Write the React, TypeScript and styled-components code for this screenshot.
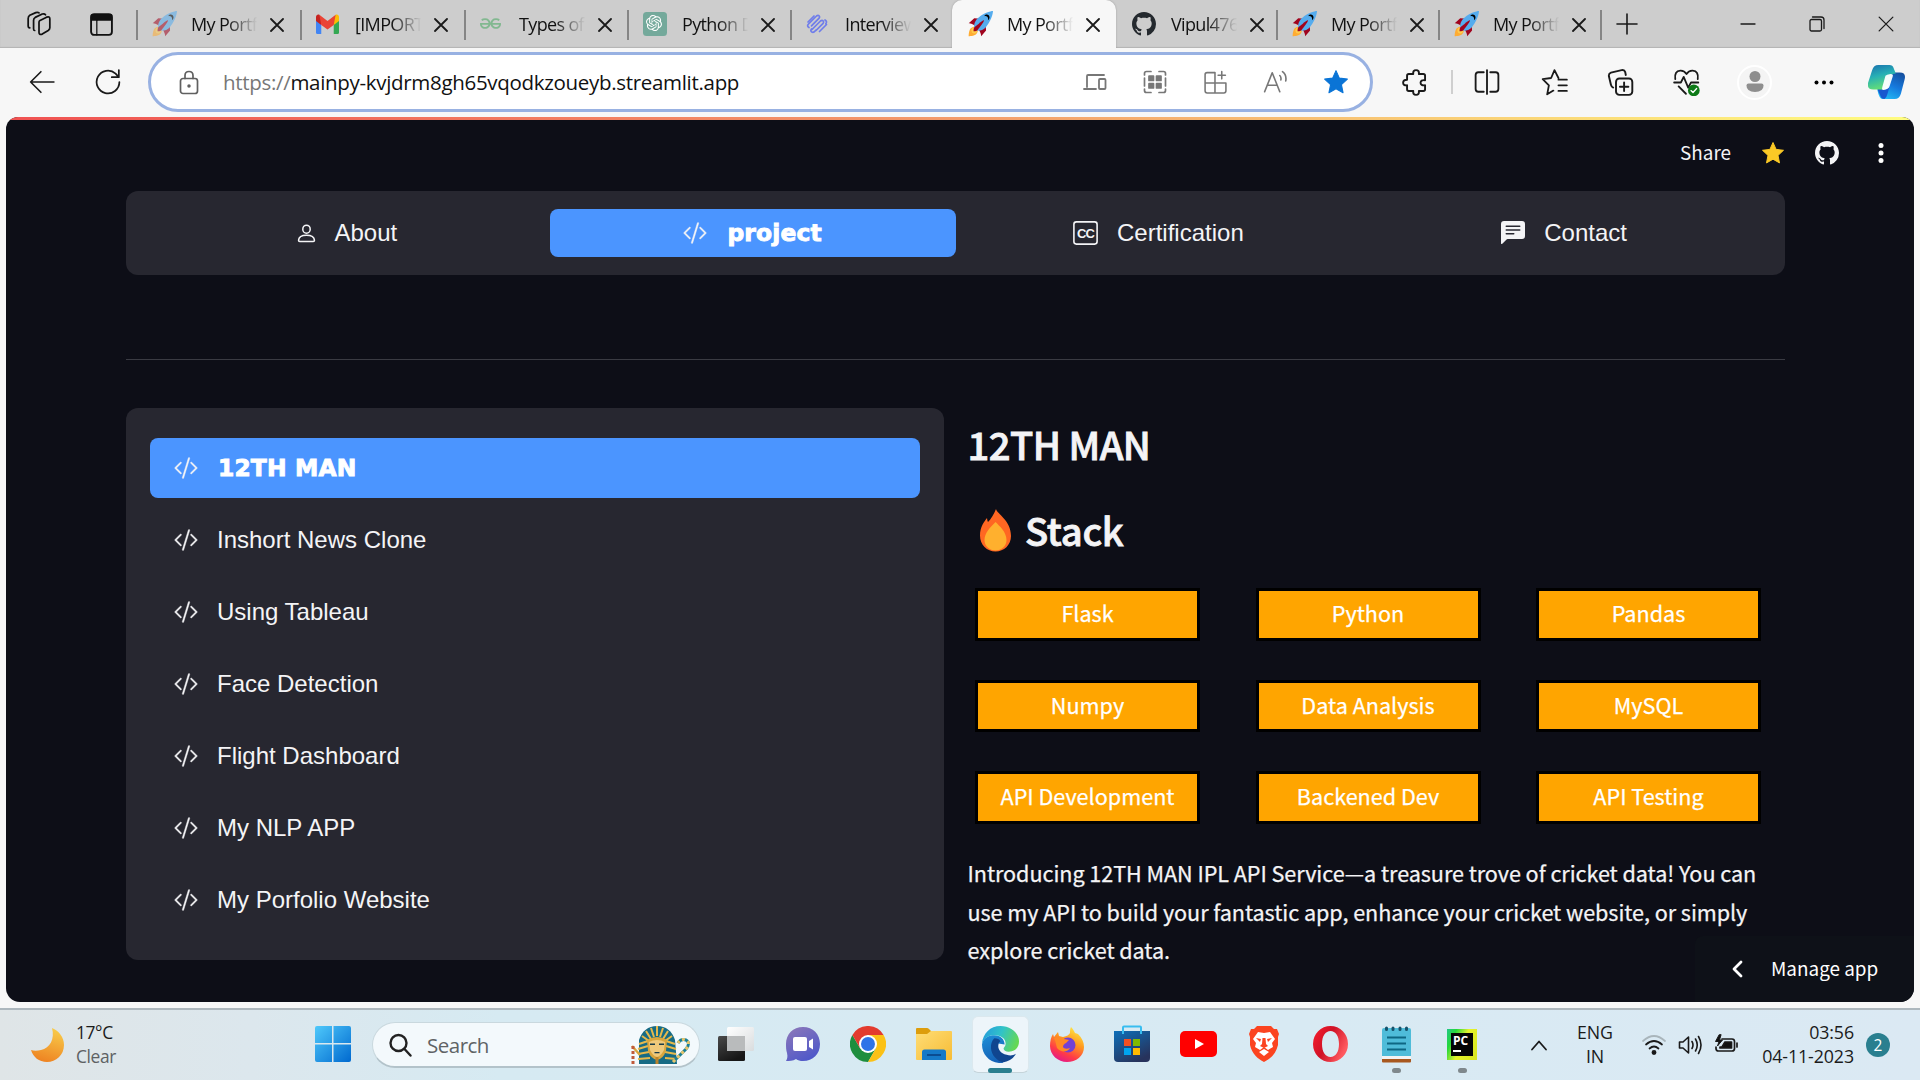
import React from "react";
import styled, { createGlobalStyle, css } from "styled-components";
import { BsCodeSlash, BsChatLeftTextFill, BsGithub } from "react-icons/bs";
import { SiOpenai, SiGeeksforgeeks } from "react-icons/si";

const UI = `"Open Sans", "Noto Sans", sans-serif`;
const SOURCE = `"Noto Sans CJK SC", "Open Sans", sans-serif`;
const ARIAL = `"Liberation Sans", Arial, sans-serif`;

const Global = createGlobalStyle`
  * { box-sizing: border-box; }
  html, body { margin: 0; padding: 0; overflow: hidden; }
  svg { display: block; flex: none; }
`;

/* ---------- window ---------- */
const Window = styled.div`
  width: 1920px;
  height: 1080px;
  display: flex;
  flex-direction: column;
  background: #f7f7f7;
  font-family: ${UI};
  overflow: hidden;
`;

/* ---------- tab strip ---------- */
const TabStrip = styled.div`
  height: 48px;
  flex: none;
  display: flex;
  background: #cdcdcd;
  box-shadow: inset 0 -1px 1px #b4b4b4;
`;
const StripTools = styled.div`
  width: 136px;
  display: flex;
  align-items: center;
  padding-left: 26px;
  gap: 37px;
`;
const Tab = styled.div<{ $w: number; $active?: boolean; $line?: boolean }>`
  width: ${(p) => p.$w}px;
  height: 48px;
  flex: none;
  display: flex;
  align-items: center;
  padding: 0 0 1px 16px;
  background: linear-gradient(#858585, #858585) no-repeat 0 10px / ${(p) => (p.$line ? 2 : 0)}px 30px;
  ${(p) =>
    p.$active &&
    css`
      background: #f7f7f7;
      border-radius: 10px 10px 0 0;
      box-shadow: 0 0 2px #999;
      clip-path: inset(0 -3px 0 -3px);
    `}
`;
const TabIcon = styled.div<{ $faded?: boolean }>`
  width: 25px;
  opacity: ${(p) => (p.$faded ? 0.55 : 1)};
`;
const TabTitle = styled.div`
  width: 72px;
  margin-left: 14px;
  white-space: nowrap;
  font-size: 18px;
  line-height: 28px;
  letter-spacing: -0.65px;
  color: #111;
  mask-image: linear-gradient(90deg, #000 50%, transparent 92%);
`;
const TabClose = styled.div`
  margin-left: 7px;
  padding-top: 2px;
`;
const WindowButtons = styled.div`
  margin-left: auto;
  display: flex;
`;
const WindowButton = styled.div`
  width: 69px;
  height: 47px;
  display: grid;
  place-items: center;
`;
const NewTab = styled.div`
  width: 54px;
  display: grid;
  place-items: center;
  background: linear-gradient(#858585, #858585) no-repeat 0 10px / 2px 30px;
`;

/* ---------- toolbar ---------- */
const Toolbar = styled.div`
  height: 69px;
  flex: none;
  display: flex;
  align-items: center;
  padding: 0 4px 1px 9px;
`;
const ToolCell = styled.div<{ $w: number }>`
  width: ${(p) => p.$w}px;
  flex: none;
  display: grid;
  place-items: center;
`;
const ExtensionsCell = styled(ToolCell)`
  padding-left: 7px;
`;
const ToolDivider = styled.div`
  width: 2px;
  height: 24px;
  background: #cfcfcf;
`;
const AddressBar = styled.div`
  width: 1225px;
  height: 60px;
  margin-left: 7px;
  display: flex;
  align-items: center;
  border: 3px solid #98b1e2;
  border-radius: 30px;
  background: #fff;
  padding: 0 5px 0 28px;
`;
const Url = styled.div`
  margin-left: 23px;
  flex: 1;
  font-size: 20.5px;
  line-height: 30px;
  letter-spacing: -0.31px;
  color: #111;
  white-space: nowrap;
  span { color: #777; }
`;
const Avatar = styled.div`
  width: 35px;
  height: 35px;
  border-radius: 50%;
  border: 2px solid #fff;
  background: #f4f4f4;
  display: grid;
  place-items: center;
`;

/* ---------- web page ---------- */
const Page = styled.div`
  position: relative;
  height: 885px;
  flex: none;
  margin: 0 6px;
  border-radius: 12px 12px 14px 14px;
  background: #0d0e17;
  overflow: hidden;
  font-family: ${SOURCE};
  color: #f4f4f6;
`;
const Decoration = styled.div`
  height: 3px;
  background: linear-gradient(90deg, #f05252, #f39c6b 50%, #fffd80);
`;
const AppHeader = styled.div`
  height: 66px;
  display: flex;
  align-items: center;
  justify-content: flex-end;
  padding-right: 21px;
`;
const Share = styled.div`
  font-size: 18.9px;
  line-height: 24px;
  margin-right: 30px;
  padding-bottom: 2px;
`;
const HeaderIcon = styled.div<{ $w: number }>`
  width: ${(p) => p.$w}px;
  display: grid;
  place-items: center;
`;
const Content = styled.main`
  padding: 5px 129px 0 120px;
`;
const NavBar = styled.nav`
  height: 84px;
  padding: 18px;
  display: grid;
  grid-template-columns: repeat(4, 1fr);
  border-radius: 12px;
  background: #272730;
`;
const NavItem = styled.div<{ $active?: boolean }>`
  display: flex;
  align-items: center;
  justify-content: center;
  gap: 19px;
  border-radius: 8px;
  font-family: ${ARIAL};
  font-size: 24px;
  color: #f4f4f6;
  background: ${(p) => (p.$active ? "#4b95ff" : "transparent")};
`;
const CodeIcon = styled(BsCodeSlash)`
  width: 24px;
  height: 24px;
  stroke: currentColor;
  stroke-width: 0.25px;
`;
const Heavy = styled.span`
  margin-left: 1px;
  font-family: "DejaVu Sans", ${ARIAL};
  font-weight: 700;
  font-size: 23.4px;
  letter-spacing: 0.15px;
  -webkit-text-stroke: 0.9px #fff;
  color: #fff;
`;
const Rule = styled.hr`
  height: 1px;
  border: 0;
  margin: 84px 0 48px;
  background: #3a3b43;
`;
const Columns = styled.div`
  display: grid;
  grid-template-columns: 818px 1fr;
  column-gap: 24px;
  align-items: start;
`;
const Menu = styled.div`
  padding: 30px 24px;
  display: flex;
  flex-direction: column;
  gap: 12px;
  border-radius: 12px;
  background: #272730;
`;
const MenuItem = styled.div<{ $active?: boolean }>`
  height: 60px;
  padding-left: 24px;
  display: flex;
  align-items: center;
  gap: 19px;
  border-radius: 8px;
  font-family: ${ARIAL};
  font-size: 24px;
  color: #f4f4f6;
  background: ${(p) => (p.$active ? "#4b95ff" : "transparent")};
`;
const Title = styled.h1`
  margin: 11px 0 36px -0.5px;
  font-size: 38.2px;
  line-height: 50px;
  font-weight: 500;
  letter-spacing: -0.55px;
  -webkit-text-stroke: 0.8px currentColor;
`;
const StackTitle = styled.h1`
  margin: 0 0 33px;
  padding-left: 11px;
  display: flex;
  align-items: center;
  gap: 13px;
  font-size: 38.2px;
  line-height: 50px;
  font-weight: 500;
  letter-spacing: -0.3px;
  -webkit-text-stroke: 0.8px currentColor;
`;
const Skills = styled.div`
  padding-left: 7px;
  display: grid;
  grid-template-columns: repeat(3, 225px);
  gap: 39px 55.5px;
`;
const Skill = styled.div`
  height: 52.6px;
  border: 3px solid #000;
  background: #ffa500;
  color: #fff;
  font-size: 21.6px;
  line-height: 43px;
  text-align: center;
  -webkit-text-stroke: 0.25px currentColor;
`;
const Intro = styled.p`
  margin: 30.4px 0 0 -0.5px;
  width: 810px;
  font-size: 21.6px;
  letter-spacing: -0.055px;
  line-height: 38.4px;
  white-space: nowrap;
  -webkit-text-stroke: 0.25px currentColor;
`;
const ManageApp = styled.div`
  position: absolute;
  right: 0;
  bottom: 0;
  width: 219px;
  height: 66px;
  padding-left: 36px;
  display: flex;
  align-items: center;
  gap: 28px;
  border-top-left-radius: 8px;
  background: #0e1118;
  color: #fff;
  font-size: 18.9px;
  white-space: nowrap;
`;
const ManageLabel = styled.span`
  line-height: 24px;
  padding-bottom: 2px;
`;

/* ---------- taskbar ---------- */
const Taskbar = styled.div`
  height: 72px;
  flex: none;
  margin-top: 6px;
  display: flex;
  align-items: center;
  border-top: 2px solid #adb7bd;
  background: linear-gradient(90deg, #dfe5e7 0, #dce7ed 250px, #d6eaf2 500px, #d8eaf3 1300px, #dbe9f3 1920px);
`;
const Weather = styled.div`
  width: 300px;
  padding-left: 30px;
  display: flex;
  align-items: center;
  gap: 11px;
`;
const WeatherText = styled.div`
  padding-bottom: 2px;
  font-size: 17.4px;
  line-height: 24px;
  letter-spacing: -0.4px;
  color: #1b1b1b;
  div + div { color: #5d6163; }
`;
const SearchBox = styled.div`
  width: 328px;
  height: 46px;
  margin: 0 3px 0 6px;
  padding: 0 8px 0 15px;
  display: flex;
  align-items: center;
  border-radius: 23px;
  border: 1px solid #c9d8de;
  border-bottom: 2px solid #b3c3ca;
  background: #f3f9fc;
`;
const SearchLabel = styled.div`
  flex: 1;
  margin-left: 15px;
  font-size: 20.5px;
  letter-spacing: -0.5px;
  color: #5f6365;
`;
const TaskItem = styled.div<{ $active?: boolean }>`
  width: 66px;
  height: 70px;
  flex: none;
  position: relative;
  display: grid;
  place-items: center;
  padding-bottom: 2px;
`;
const ActiveTile = styled.div`
  width: 57px;
  height: 57px;
  display: grid;
  place-items: center;
  border: 1px solid #dbe8ee;
  border-bottom-color: #c5d4da;
  border-radius: 6px;
  background: #edf5fa;
`;
const Indicator = styled.div<{ $active?: boolean }>`
  position: absolute;
  left: ${(p) => (p.$active ? 21 : 29)}px;
  bottom: 7px;
  width: ${(p) => (p.$active ? 24 : 9)}px;
  height: 5px;
  border-radius: 3px;
  background: ${(p) => (p.$active ? "#2a7f8f" : "#7f888c")};
`;
const Tray = styled.div`
  margin-left: auto;
  padding-right: 30px;
  display: flex;
  align-items: center;
`;
const TrayText = styled.div<{ $align: "center" | "right"; $w: number }>`
  width: ${(p) => p.$w}px;
  padding-bottom: 2px;
  text-align: ${(p) => p.$align};
  font-size: 17.8px;
  line-height: 24px;
  letter-spacing: -0.1px;
  color: #1b1b1b;
  white-space: nowrap;
`;
const TrayIcons = styled.div`
  display: flex;
  gap: 12px;
  margin: 0 20px 0 0;
`;
const Badge = styled.div`
  width: 24px;
  height: 24px;
  margin-left: 12px;
  border-radius: 50%;
  display: grid;
  place-items: center;
  background: #2a7f8f;
  color: #fff;
  font-size: 15.5px;
  line-height: 20px;
`;

/* ---------- drawings ---------- */
type LineProps = { w?: number; h?: number; sw?: number; c?: string; vb?: string; children: React.ReactNode };
const Line = ({ w = 26, h, sw = 1.5, c = "#1a1a1a", vb = "0 0 24 24", children }: LineProps) => (
  <svg width={w} height={h ?? w} viewBox={vb} fill="none" stroke={c} strokeWidth={sw} strokeLinecap="round" strokeLinejoin="round">
    {children}
  </svg>
);

const Rocket = () => (
  <svg width="25" height="26" viewBox="0 0 36 36" preserveAspectRatio="none">
    <path fill="#A0041E" d="M1 17l8-7 16 1 1 16-7 8s.001-5.999-6-12-12-6-12-6z" />
    <path fill="#FFAC33" d="M.973 35s-.036-7.979 2.985-11S15 21.187 15 21.187 14.999 29 11.999 32c-3 3-11.026 3-11.026 3z" />
    <circle fill="#FFCC4D" cx="8.999" cy="27" r="4" />
    <path fill="#55ACEE" d="M35.999 0s-10 0-22 10c-6 5-6 14-4 16s11 2 16-4c10-12 10-22 10-22z" />
    <path d="M26.999 5c-1.623 0-3.013.971-3.641 2.36.502-.227 1.055-.36 1.641-.36 2.209 0 4 1.791 4 4 0 .586-.133 1.139-.359 1.640 1.389-.627 2.359-2.017 2.359-3.640 0-2.209-1.791-4-4-4z" />
    <path fill="#A0041E" d="M8 28s0-4 1-5 13.001-10.999 14-10-9.001 13-10.001 14S8 28 8 28z" />
  </svg>
);
const Gmail = () => (
  <svg width="23" height="20" viewBox="0 0 24 20" preserveAspectRatio="none">
    <path fill="#4285f4" d="M0 5v13.500a1.500 1.500 0 001.500 1.500H5.500V8z" />
    <path fill="#34a853" d="M24 5v13.500a1.500 1.500 0 01-1.500 1.500h-4V8z" />
    <path fill="#c5221f" d="M0 3v4l5.500 4V4.500L3.800 1C2 0 0 1 0 3z" />
    <path fill="#fbbc04" d="M24 3v4l-5.500 4V4.500L20.200 1C22 0 24 1 24 3z" />
    <path fill="#ea4335" d="M3.500.8L12 7l8.500-6.200L18.500 11 12 15.500 5.500 11z" />
  </svg>
);
const OpenAi = () => (
  <svg width="24" height="24" viewBox="0 0 24 24">
    <rect width="24" height="24" rx="3.500" fill="#74a99b" />
    <SiOpenai x="3" y="3" width="18" height="18" color="#fff" />
  </svg>
);
const Squiggle = () => (
  <Line w={22} sw={1.7} c="#6f7dea" vb="0 0 22 22">
    <path d="M2 9l6-6M3 14.500q-2.500-1.500-.5-3.500l8-8q1.500-1.200 2.600-.2t0 2.400l-7.600 7.600" />
    <path d="M6 16.500l8.500-8.500q1.500-1.200 2.600-.2t0 2.500L10 17.500M20.500 11.500l-7 7M19 7q2.500 1.500.8 3.800M5.500 16q-1.500 2 .3 3t3.500-1.200l1-1" />
  </Line>
);
const Cross = ({ size = 14, sw = 1.8 }: { size?: number; sw?: number }) => (
  <Line w={size} sw={sw} vb="0 0 14 14"><path d="M1 1l12 12M13 1L1 13" /></Line>
);
const Person = () => (
  <Line w={19} h={19} sw={1.6} c="#f4f4f6" vb="0 0 20 20">
    <ellipse cx="10" cy="5.500" rx="3.900" ry="4.300" />
    <path d="M1.600 17.200Q2 11.800 10 11.800t8.400 5.400q0 1.300-1.300 1.300H2.900q-1.300 0-1.300-1.300z" />
  </Line>
);
const CcText = styled.text`
  font: 700 13px ${ARIAL};
  fill: #f4f4f6;
  letter-spacing: -0.8px;
`;
const BadgeCc = () => (
  <svg width="25" height="24" viewBox="0 0 25 24">
    <rect x="0.900" y="0.900" width="23.200" height="22.200" rx="2.500" fill="none" stroke="#f4f4f6" strokeWidth="1.600" />
    <CcText x="4" y="16.700">CC</CcText>
  </svg>
);
const starPath = "M12 1.500l3.100 6.900 7.400.9-5.500 5.100 1.500 7.500L12 18.200l-6.500 3.700L7 14.400 1.500 9.300l7.400-.9z";
const Star = ({ size, color }: { size: number; color: string }) => (
  <svg width={size} height={size} viewBox="0 0 24 24" fill={color} stroke={color} strokeLinejoin="round"><path d={starPath} /></svg>
);
const Copilot = () => (
  <svg width="37" height="34" viewBox="0 0 36 32" preserveAspectRatio="none">
    <defs>
      <linearGradient id="cpA" x1="0" y1="0" x2="0.300" y2="1"><stop stopColor="#1a6fae" /><stop offset=".5" stopColor="#27b0b5" /><stop offset="1" stopColor="#62dd78" /></linearGradient>
      <linearGradient id="cpB" x1="0.800" y1="0" x2="0.300" y2="1"><stop stopColor="#1550a0" /><stop offset=".5" stopColor="#1679dd" /><stop offset="1" stopColor="#23baf4" /></linearGradient>
    </defs>
    <path fill="url(#cpB)" d="M26 7h5q6 0 4.800 6L32 27q-1.500 5-6 5H14q-3 0-5-9h7q2 0 3-3l3-10q1-3 4-3z" />
    <path fill="#1958cf" d="M9 22l3 7q1 3 4 3 2-1 3-5l2-7q-2 3-5 3z" />
    <path fill="url(#cpA)" d="M10 0h11q3 0 4 3l2 5q-4 0-5 3l-4 10q-1 2-4 2H5q-6 0-5-6L4 5q1.500-5 6-5z" />
    <path fill="#fff" opacity=".95" d="M17 10q1-1 5-1.500 3 0 2 2.500l-3 9q-1 3-6 3.500-2 0-1-3z" />
  </svg>
);
const Fire = () => (
  <svg width="33" height="43" viewBox="0 0 33 43">
    <path fill="#ff6722" d="M17 0c1 5 15 11 15 27 0 9-7 15.500-15.500 15.500S1 36 1 26.500C1 18 5 13 8 9c.3 2 .5 3 1 4C12 10 15 5 17 0z" />
    <path fill="#ffb02e" d="M16.500 13c4 4 11 10 11 18 0 6-5 10.500-11 10.500S5.500 37 5.500 31c0-7 6-13 11-18z" />
  </svg>
);

const Moon = () => (
  <svg width="35" height="36" viewBox="0 0 35 36">
    <defs><linearGradient id="moon" x1=".7" y1="0" x2=".4" y2="1"><stop stopColor="#f8cc4a" /><stop offset="1" stopColor="#ee8322" /></linearGradient></defs>
    <path fill="url(#moon)" d="M22 1c7 3 12 9 12 17 0 10-8 17-17 17C9 35 3 30 1 23c3 1 6 1 10 0 9-2 14-11 11-22z" />
  </svg>
);
const WindowsLogo = () => (
  <svg width="36" height="36" viewBox="0 0 36 36">
    <defs><linearGradient id="win" gradientUnits="userSpaceOnUse" x1="0" y1="0" x2="36" y2="36"><stop stopColor="#4fc9fb" /><stop offset="1" stopColor="#0069cf" /></linearGradient></defs>
    <path fill="url(#win)" d="M2 0h15v17H0V2q0-2 2-2zM18.500 0H34q2 0 2 2v15H18.500zM0 18.500h17V36H2q-2 0-2-2zM18.500 18.500H36V34q0 2-2 2H18.500z" />
  </svg>
);
const Pharaoh = () => (
  <svg width="61" height="38" viewBox="0 0 61 38">
    <path fill="#176b84" d="M9 38V14C12 5 18 0 27 0s15 5 18 14l2 24z" />
    <path fill="none" stroke="#e6b94c" strokeWidth="2" d="M9 18l9-3M8 23l10-3M8 28l11-2M8 33l12-1M45 18l-9-3M46 23l-10-3M46 28l-11-2M47 33l-12-1M16 5l5 8M21 2l3 9M33 2l-3 9M38 5l-5 8M12 10l7 5M42 10l-7 5M27 0v10" />
    <path fill="#d9a63e" d="M17 14q10-6 20 0l-1 11q-3 8-9 9-6-1-9-9z" />
    <path fill="#efc97b" d="M19 16q8-4 16 0l-1 8q-3 6-7 7-4-1-7-7z" />
    <path fill="#1b3c48" d="M20 17.500h5v1.500h-5zM29 17.500h5v1.500h-5zM24.500 26h5v1.200h-5z" />
    <path fill="#b9832d" d="M25.500 31h3v7h-3z" />
    <path fill="none" stroke="#d9a63e" strokeWidth="2.500" d="M2 20l8 9" />
    <path fill="none" stroke="#c05a3a" strokeWidth="3" strokeDasharray="3 2" d="M3 20v18" />
    <path fill="none" stroke="#1b7f96" strokeWidth="3" d="M43 36l13-13q5-6 0-9-5-2-8 3" />
    <path fill="none" stroke="#e6c56c" strokeWidth="3" strokeDasharray="3 3" d="M43 36l13-13q5-6 0-9-5-2-8 3" />
  </svg>
);
const TaskView = () => (
  <svg width="36" height="36" viewBox="0 0 36 36">
    <defs>
      <linearGradient id="tvA" x1="0" y1="0" x2="0.500" y2="1"><stop stopColor="#4a4a4a" /><stop offset="1" stopColor="#161616" /></linearGradient>
      <linearGradient id="tvB" x1="0" y1="0" x2="1" y2="1"><stop stopColor="#fff" /><stop offset="1" stopColor="#d9dcde" /></linearGradient>
    </defs>
    <rect x="0" y="10" width="27" height="25" rx="1.500" fill="url(#tvA)" />
    <rect x="9" y="1" width="27" height="24" rx="1.500" fill="url(#tvB)" />
    <path fill="#b9bbbc" d="M9 10h18v15H9z" />
  </svg>
);
const Teams = () => (
  <svg width="35" height="36" viewBox="0 0 35 36">
    <defs><linearGradient id="tm" x1="0" y1="0" x2=".6" y2="1"><stop stopColor="#8f79b8" /><stop offset="1" stopColor="#5059c9" /></linearGradient></defs>
    <path fill="url(#tm)" d="M18 1c10 0 17 7 17 17s-7 17-17 17c-3 0-5-.5-7-2-3 2-7 2-10 2 1-2 2-4 1-8-1-3-1-6-1-9C1 8 8 1 18 1z" />
    <rect x="8" y="11" width="14" height="14" rx="2" fill="#fff" /><path fill="#fff" d="M24 15l4-2.500v11L24 21z" />
  </svg>
);
const Chrome = () => (
  <svg width="36" height="36" viewBox="0 0 48 48">
    <path fill="#1e8e3e" d="M13.600 30L3.200 12A24 24 0 0024 48l10.400-18z" />
    <path fill="#fbc116" d="M24 48a24 24 0 0020.800-36H24l10.400 18z" />
    <path fill="#e33b2e" d="M3.200 12a24 24 0 0141.600 0H24L13.600 30z" />
    <circle cx="24" cy="24" r="12" fill="#fff" /><circle cx="24" cy="24" r="9.300" fill="#2f74e8" />
  </svg>
);
const Folder = () => (
  <svg width="36" height="34" viewBox="0 0 36 34">
    <defs><linearGradient id="fo" x1="0" y1="0" x2="1" y2="1"><stop stopColor="#fedd76" /><stop offset="1" stopColor="#f7bc35" /></linearGradient></defs>
    <path fill="#dd9d0c" d="M0 8V2q0-1 1-1h10q1 0 2 1l2 2v5z" />
    <path fill="url(#fo)" d="M0 7h11l4-3h20q1 0 1 1v27q0 1-1 1H1q-1 0-1-1z" />
    <path fill="#1579c8" d="M6 33v-8q0-2.500 2.500-2.500h19Q30 22.500 30 25v8z" /><path fill="#0b4c91" d="M11 27h14v2H11z" />
  </svg>
);
const Edge = () => (
  <svg width="37" height="37" viewBox="0 0 36 36">
    <defs>
      <linearGradient id="edA" x1="0" y1=".2" x2="1" y2=".5"><stop stopColor="#249bdd" /><stop offset=".5" stopColor="#31c3c8" /><stop offset="1" stopColor="#65d853" /></linearGradient>
      <linearGradient id="edB" x1="0" y1="0" x2="0.300" y2="1"><stop stopColor="#1e8fd8" /><stop offset="1" stopColor="#1562b7" /></linearGradient>
    </defs>
    <path fill="url(#edB)" d="M0 18C1 11 7 9 12 9c6 0 10 4 10 9l-6-1c-3 5 0 12 7 15l-3 4C8 37 0 28 0 18z" />
    <path fill="#10458f" d="M12 12c-5 5-4 14 1 19 3 3 6 5 9 4 5-1 9-4 11-8-3 2-6 2-9 1-6-1-9-6-8-10 0-2 1-3 2-3-1-2-3-3-6-3z" />
    <path fill="url(#edA)" d="M0 17C1 7 8 0 18 0s18 7 18 15c0 6-4 10-10 10-3 0-5-1-5-3 0-1 2-2 2-5 0-5-5-8-11-8C6 9 2 12 0 17z" />
  </svg>
);
const Firefox = () => (
  <svg width="35" height="36" viewBox="0 0 35 36">
    <defs><linearGradient id="ff" x1=".8" y1="0" x2=".3" y2="1"><stop stopColor="#fff04a" /><stop offset=".4" stopColor="#ff9a1f" /><stop offset=".75" stopColor="#ff3b47" /><stop offset="1" stopColor="#e3178d" /></linearGradient></defs>
    <path fill="url(#ff)" d="M22 1c2 2 3 4 4 6l3 1c4 4 6 8 6 13 0 9-8 15-17 15S1 29 1 20c0-5 1-9 3-12l1 3 4-5 1 4 4 1c4-1 6-2 7-4 0-2 0-4 1-6z" />
    <circle cx="19" cy="19" r="7.500" fill="#7341d4" />
    <path fill="#ff8a25" d="M5 12c3-2 7-1 10 1l5 1-3 3c-2 1-3 2-3 4 1 2 4 2 7 1-2 4-9 5-13 0-1-3-1-6-3-10z" />
  </svg>
);
const Store = () => (
  <svg width="36" height="38" viewBox="0 0 36 38">
    <defs><linearGradient id="st" x1="0" y1="0" x2="0.600" y2="1"><stop stopColor="#0d6fb9" /><stop offset="1" stopColor="#27335c" /></linearGradient></defs>
    <path fill="url(#st)" d="M0 6h36v27q0 4-4 4H4q-4 0-4-4z" />
    <path fill="none" stroke="#38bdf0" strokeWidth="2" d="M9 9V2.500q0-1 1-1h16q1 0 1 1V9" />
    <path fill="#f25022" d="M10 14h7v7h-7z" /><path fill="#7fba00" d="M19 14h7v7h-7z" /><path fill="#00a4ef" d="M10 23h7v7h-7z" /><path fill="#ffb900" d="M19 23h7v7h-7z" />
  </svg>
);
const YouTube = () => (
  <svg width="37" height="26" viewBox="0 0 37 26"><rect width="37" height="26" rx="5" fill="#f00" /><path fill="#fff" d="M15 8l9 5-9 5z" /></svg>
);
const Brave = () => (
  <svg width="30" height="36" viewBox="0 0 30 36">
    <path fill="#fb4420" d="M8 0h14l3 3 3 0 2 5-1 3 0 8c-2 9-8 14-14 17C9 33 3 28 1 19l0-8L0 8l2-5 3 0z" />
    <path fill="#fff" d="M9 6l6 1 6-1 5 7-3 4 1 4-5 3-4-3-4 3-5-3 1-4-3-4zM15 23l5 3-5 4-5-4z" />
    <path fill="#fb4420" d="M7 12l5 1-1 3zM23 12l-5 1 1 3zM13.500 12h3l.5 6 2 2-4 2-4-2 2-2z" />
  </svg>
);
const Opera = () => (
  <svg width="35" height="36" viewBox="0 0 35 36">
    <defs><linearGradient id="op" x1="0" y1="0" x2="1" y2="0.500"><stop stopColor="#fa1e2d" /><stop offset=".5" stopColor="#cf1226" /><stop offset="1" stopColor="#ff5a5f" /></linearGradient></defs>
    <path fill="url(#op)" fillRule="evenodd" d="M17.500 0a17.500 18 0 110 36 17.500 18 0 010-36zm0 5c-5 0-8.500 5-8.500 13s3.500 13 8.500 13S26 26 26 18 22.500 5 17.500 5z" />
  </svg>
);
const Notepad = () => (
  <svg width="29" height="37" viewBox="0 0 29 37">
    <rect x="0" y="2" width="29" height="31" rx="2" fill="#4fbcd9" /><path fill="#f3f3f3" d="M0 30h29v3H0z" /><path fill="#a8581f" d="M0 33h29v2.500q0 1-1 1H1q-1 0-1-1z" />
    <path fill="none" stroke="#17536b" strokeWidth="3" strokeLinecap="round" d="M4.500 2v1.500M11 2v1.500M18 2v1.500M24.500 2v1.500" />
    <path stroke="#0e6783" strokeWidth="1.800" d="M5 11.500h19M5 17.500h19M5 23.500h19" />
  </svg>
);
const PyFrame = styled.div`
  width: 30px;
  height: 31px;
  padding: 4px;
  background: linear-gradient(115deg, #21c787, #25d83a 22%, #e5f32b 50%, #d8e51f);
`;
const PyInner = styled.div`
  width: 22px;
  height: 23px;
  padding: 1px 0 0 2px;
  background: #050505;
  color: #fff;
  font: 700 12px/13px ${UI};
  &::after {
    content: "";
    display: block;
    width: 8px;
    height: 2px;
    margin-top: 3px;
    background: #fff;
  }
`;

/* ---------- data ---------- */
const tabs = [
  { title: "My Portf", icon: <Rocket />, w: 164, faded: true, line: true },
  { title: "[IMPORT", icon: <Gmail />, w: 164, line: true },
  { title: "Types of", icon: <SiGeeksforgeeks size={21} color="#82b890" />, w: 163, line: true },
  { title: "Python D", icon: <OpenAi />, w: 163, line: true },
  { title: "Interview", icon: <Squiggle />, w: 162, line: true },
  { title: "My Portf", icon: <Rocket />, w: 164, active: true },
  { title: "Vipul476", icon: <BsGithub size={24} color="#24292e" />, w: 160 },
  { title: "My Portf", icon: <Rocket />, w: 162, line: true },
  { title: "My Portf", icon: <Rocket />, w: 162, line: true },
];
const projects = ["12TH MAN", "Inshort News Clone", "Using Tableau", "Face Detection", "Flight Dashboard", "My NLP APP", "My Porfolio Website"];
const skills = ["Flask", "Python", "Pandas", "Numpy", "Data Analysis", "MySQL", "API Development", "Backened Dev", "API Testing"];
const apps: { icon: React.ReactNode; state?: "active" | "open" }[] = [
  { icon: <TaskView /> }, { icon: <Teams /> }, { icon: <Chrome /> }, { icon: <Folder /> },
  { icon: <ActiveTile><Edge /></ActiveTile>, state: "active" }, { icon: <Firefox /> }, { icon: <Store /> }, { icon: <YouTube /> },
  { icon: <Brave /> }, { icon: <Opera /> }, { icon: <Notepad />, state: "open" },
  { icon: <PyFrame><PyInner>PC</PyInner></PyFrame>, state: "open" },
];

export default function App() {
  return (
    <>
      <Global />
      <Window>
        <TabStrip>
          <StripTools>
            <Line w={26} sw={1.6} c="#111">
              <path d="M12.500 9l6.500-3.300q3-1.200 3 1.500v8.300q0 1.500-1.500 2.500l-5.500 3.300q-3 1.200-3-1.800V10.500q0-1 .5-1.500zM8 18q-1 0-1-1.500V8.500q0-1.800 1.500-2.600L15 2.800q2-.7 3 .7M3.500 15.500q-1.500 0-1.500-2V7q0-2 1.500-3l5.500-2.500q2-.6 3 .3" />
            </Line>
            <Line w={25} sw={1.8} c="#111">
              <rect x="2" y="2" width="20" height="20" rx="3" /><path fill="#111" d="M2.500 3h19v4.500h-19z" /><path d="M7.500 8v14" strokeWidth="1.200" />
            </Line>
          </StripTools>
          {tabs.map((t, i) => (
            <Tab key={i} $w={t.w} $active={t.active} $line={t.line}>
              <TabIcon $faded={t.faded}>{t.icon}</TabIcon>
              <TabTitle>{t.title}</TabTitle>
              <TabClose><Cross /></TabClose>
            </Tab>
          ))}
          <NewTab><Line w={22} sw={1.6} vb="0 0 22 22"><path d="M11 1v20M1 11h20" /></Line></NewTab>
          <WindowButtons>
            <WindowButton><Line w={16} sw={1.3} vb="0 0 16 16"><path d="M1 8h14" /></Line></WindowButton>
            <WindowButton>
              <Line w={16} sw={1.3} vb="0 0 16 16"><rect x="1" y="3.500" width="11.500" height="11.500" rx="1.500" /><path d="M3.500 1H12q3 0 3 3v8.500" /></Line>
            </WindowButton>
            <WindowButton><Cross size={16} sw={1.1} /></WindowButton>
          </WindowButtons>
        </TabStrip>

        <Toolbar>
          <ToolCell $w={66}><Line w={26} sw={1.5}><path d="M23 12H1.500M11 2.500L1.500 12l9.500 9.500" /></Line></ToolCell>
          <ToolCell $w={66}><Line w={26} sw={1.6}><path d="M22.500 12A10.500 10.500 0 1119 4.200l2.500 2.800M22 1v6.500h-6.500" /></Line></ToolCell>
          <AddressBar>
            <Line w={21} h={25} sw={1.7} c="#606060" vb="0 0 21 25"><rect x="1.500" y="8.500" width="17" height="15" rx="2.500" /><path d="M6 8.500V5.500q0-4 4-4t4 4v3" /><circle cx="10" cy="16" r=".9" fill="#606060" /></Line>
            <Url><span>https://</span>mainpy-kvjdrm8gh65vqodkzoueyb.streamlit.app</Url>
            <ToolCell $w={60}><Line c="#777" w={24} sw={1.8}><path d="M21 5H5q-1 0-1 1v11M1 19h12" /><rect x="16" y="9" width="6.500" height="10" rx="1" /></Line></ToolCell>
            <ToolCell $w={60}>
              <Line c="#777" w={24} sw={1.7}><path d="M1.500 5V3.500q0-2 2-2H8M16 1.500h4.500q2 0 2 2V5M22.500 19v1.500q0 2-2 2H16M8 22.500H3.500q-2 0-2-2V19M1.500 8v8M22.500 8v8" /><path fill="#777" d="M6 6.200h4.500v4.300H6zM13.500 6.200H18v4.300h-4.500zM6 13.700h4.500V18H6zM13.500 13.700H18V18h-4.500z" /></Line>
            </ToolCell>
            <ToolCell $w={60}><Line c="#777" w={25} sw={1.5}><path d="M11 2.500H4q-2 0-2 2V20q0 2 2 2h16q2 0 2-2v-7.500H2M11.500 2.500V22M18 1.500v7M14.500 5h7" /></Line></ToolCell>
            <ToolCell $w={61}><Line c="#777" w={26} sw={1.5}><path d="M1.500 21L8.500 3.500 15.500 21M4 15h9M15.500 6q1.500 1.500 1 4M18 2.500q4 3 3 8.500" /></Line></ToolCell>
            <ToolCell $w={59}><Star size={26} color="#0a74d6" /></ToolCell>
          </AddressBar>
          <ExtensionsCell $w={78}>
            <Line w={27} sw={1.7}><path d="M6 4.500h4q-.5-3.500 2.500-3.500t2.500 3.500h4q1.500 0 1.500 1.500v4q-4-.5-4 2.200t4 2.300V18q0 1.500-1.500 1.500h-4q.5 3.500-2.500 3.500T10 19.500H6q-1.500 0-1.500-1.500v-3.500Q1 14.800 1 12.200T4.500 9.500V6q0-1.500 1.500-1.500z" /></Line>
          </ExtensionsCell>
          <ToolDivider />
          <ToolCell $w={68}><Line w={26} sw={1.7}><path d="M9 3H4Q1.500 3 1.500 5.500v13Q1.500 21 4 21h5M15 3h5q2.500 0 2.500 2.500v13q0 2.500-2.500 2.500h-5M12 1v22" /></Line></ToolCell>
          <ToolCell $w={66}><Line w={27} sw={1.6}><path d="M15.500 8L12 1 9 8l-7.500 1 5.500 5.500-1.500 8 5.500-3.300M15.500 9.500H23M15.500 14.500H23M15.500 19.500H23" /></Line></ToolCell>
          <ToolCell $w={66}><Line w={27} sw={1.7}><rect x="8" y="8.500" width="14.500" height="14.500" rx="3" /><path d="M15.200 12v7.500M11.500 15.800H19M5.500 16.500Q4 16 3.500 14L1.700 6.500Q1.300 4 3.500 3.200L13 1q2.500-.5 3.200 1.800l.5 2.500" /></Line></ToolCell>
          <ToolCell $w={66}>
            <Line w={27} sw={1.6}><path d="M2 9Q1 2 6.500 1.500 10 1.300 12 4.500 14 1.300 17.500 1.500 23 2 22 9M1 12h6l2.500-5 4 9.500 2.500-4.500h6.500M5 15.500l6.500 6.500" /><circle cx="18.500" cy="19" r="5.200" fill="#0d7a17" stroke="none" /><path stroke="#fff" strokeWidth="1.200" d="M16 19.200l1.800 1.700 3.200-3.500" /></Line>
          </ToolCell>
          <ToolCell $w={71}>
            <Avatar><svg width="18" height="22" viewBox="0 0 18 22" fill="#8e8e8e"><circle cx="9" cy="5.500" r="5.500" /><path d="M2.500 12.500h13q2 0 2 2 0 6.500-8.500 6.500T.5 14.500q0-2 2-2z" /></svg></Avatar>
          </ToolCell>
          <ToolCell $w={67}><svg width="20" height="5" viewBox="0 0 20 5"><circle cx="2.500" cy="2.500" r="2" /><circle cx="10" cy="2.500" r="2" /><circle cx="17.500" cy="2.500" r="2" /></svg></ToolCell>
          <ToolCell $w={58}><Copilot /></ToolCell>
        </Toolbar>

        <Page>
          <Decoration />
          <AppHeader>
            <Share>Share</Share>
            <HeaderIcon $w={24}><Star size={24} color="#fbc926" /></HeaderIcon>
            <HeaderIcon $w={84}><BsGithub size={24} /></HeaderIcon>
            <HeaderIcon $w={24}><svg width="6" height="20" viewBox="0 0 6 20" fill="#fff"><circle cx="3" cy="2.500" r="2.500" /><circle cx="3" cy="10" r="2.500" /><circle cx="3" cy="17.500" r="2.500" /></svg></HeaderIcon>
          </AppHeader>
          <Content>
            <NavBar>
              <NavItem $active={false}><Person />About</NavItem>
              <NavItem $active><CodeIcon /><Heavy>project</Heavy></NavItem>
              <NavItem><BadgeCc />Certification</NavItem>
              <NavItem><BsChatLeftTextFill size={24} />Contact</NavItem>
            </NavBar>
            <Rule />
            <Columns>
              <Menu>
                {projects.map((name, i) => (
                  <MenuItem key={name} $active={i === 0}>
                    <CodeIcon />
                    {i === 0 ? <Heavy>{name}</Heavy> : name}
                  </MenuItem>
                ))}
              </Menu>
              <div>
                <Title>12TH MAN</Title>
                <StackTitle><Fire />Stack</StackTitle>
                <Skills>{skills.map((s) => <Skill key={s}>{s}</Skill>)}</Skills>
                <Intro>
                  Introducing 12TH MAN IPL API Service—a treasure trove of cricket data! You can<br />
                  use my API to build your fantastic app, enhance your cricket website, or simply<br />
                  explore cricket data.
                </Intro>
              </div>
            </Columns>
          </Content>
          <ManageApp>
            <Line w={12} h={18} sw={2.8} c="#fff" vb="0 0 12 18"><path d="M10 2L3 9l7 7" /></Line>
            <ManageLabel>Manage app</ManageLabel>
          </ManageApp>
        </Page>

        <Taskbar>
          <Weather>
            <Moon />
            <WeatherText><div>17°C</div><div>Clear</div></WeatherText>
          </Weather>
          <TaskItem><WindowsLogo /></TaskItem>
          <SearchBox>
            <Line w={24} sw={2.4} c="#222"><circle cx="10.500" cy="10" r="8" /><path d="M16.500 16l6 6.500" /></Line>
            <SearchLabel>Search</SearchLabel>
            <Pharaoh />
          </SearchBox>
          {apps.map((a, i) => (
            <TaskItem key={i}>
              {a.icon}
              {a.state && <Indicator $active={a.state === "active"} />}
            </TaskItem>
          ))}
          <Tray>
            <Line w={18} h={11} sw={1.8} vb="0 0 18 11"><path d="M2 9.500l7-8 7 8" /></Line>
            <TrayText $align="center" $w={94}>ENG<br />IN</TrayText>
            <TrayIcons>
              <Line w={24} sw={1.7}><path stroke="#a9b5bb" d="M1 8Q12-2 23 8" /><path d="M4 11.500q8-7 16 0M7.500 15.500q4.500-4 9 0" /><circle cx="12" cy="19.500" r="1.600" fill="#111" /></Line>
              <Line w={24} sw={1.6}><path d="M1.500 9H5l5.500-5v16L5 15H1.500zM14 8.500q2 3.500 0 7M17.500 6q3.500 6 0 12M20.500 3.500q5 8.500 0 17" /></Line>
              <Line w={24} sw={1.7}><path d="M8 6h10q2.500 0 2.500 2.500v7q0 2.500-2.500 2.500H4.500Q2 18 2 15.500V14M23 10v4" /><path fill="#111" d="M6 14h2l3-5h6.500v6H6z" /><path fill="#111" strokeWidth="1" d="M5 2L1.500 8.500H5L3.500 13l5-6H5.500L7 2z" /></Line>
            </TrayIcons>
            <TrayText $align="right" $w={96}>03:56<br />04-11-2023</TrayText>
            <Badge>2</Badge>
          </Tray>
        </Taskbar>
      </Window>
    </>
  );
}
